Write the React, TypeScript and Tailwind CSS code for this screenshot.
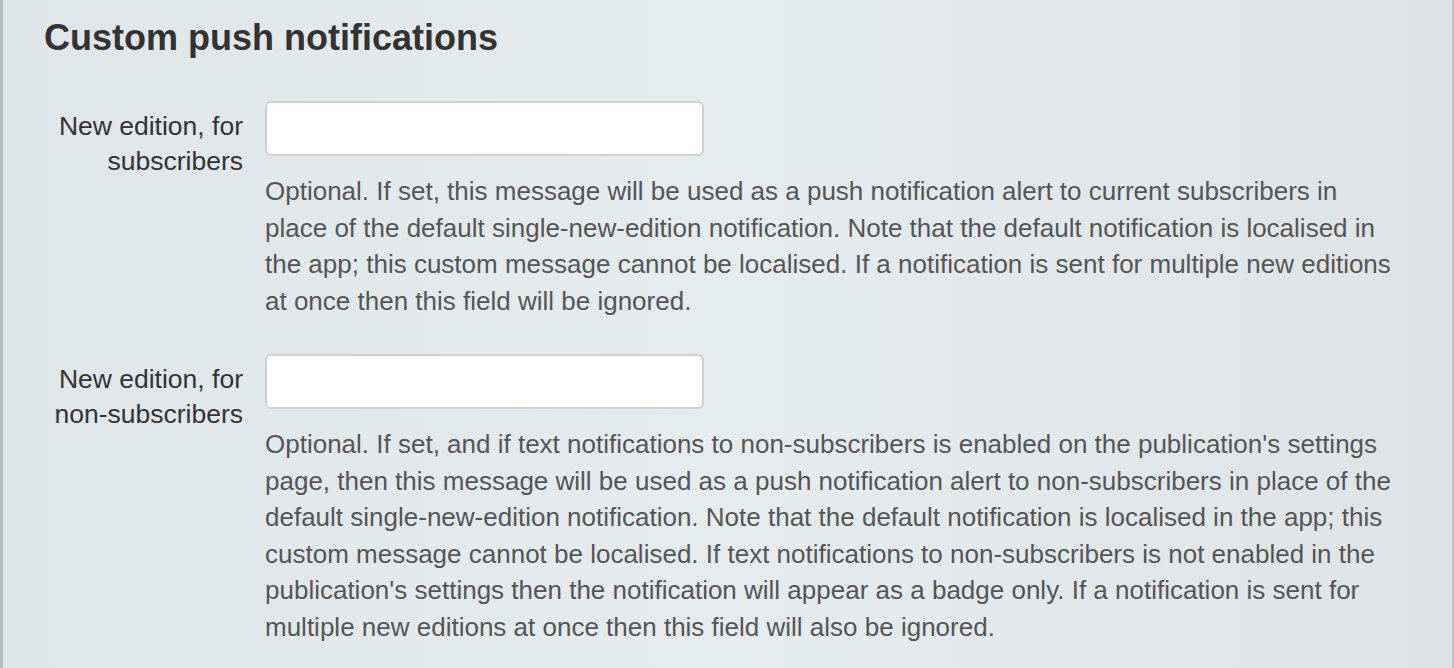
import React from "react";

function Group({ label, help }: { label: React.ReactNode; help: string }) {
  return (
    <div className="flex">
      <div className="w-[199px] shrink-0 text-right pt-[8px] text-[26.5px] leading-[35px] text-[#333]">
        {label}
      </div>
      <div className="ml-[22px] w-[1141px] shrink-0">
        <div className="w-[439px] h-[55px] bg-white border-2 border-[#d0d0d0] rounded-[6px]" />
        <p className="mt-[17px] text-[26px] leading-[36.5px] text-[#555]">{help}</p>
      </div>
    </div>
  );
}

export default function App() {
  return (
    <div
      className="w-[1454px] h-[668px] overflow-hidden flex bg-[#e6ebee]"
      style={{ fontFamily: '"Liberation Sans", Arial, sans-serif' }}
    >
      <div className="w-[3px] bg-[#b3bec4]" />
      <div className="flex-1 bg-gradient-to-r from-[#e0e5e8] via-[#e6ebee] to-[#dfe3e6] pl-[41px] pt-[17.5px]">
        <h3 className="text-[36px] font-bold text-[#333] leading-[40px]">Custom push notifications</h3>
        <div className="mt-[43.5px] flex flex-col gap-[35px]">
          <Group
            label={<>New edition, for<br />subscribers</>}
            help="Optional. If set, this message will be used as a push notification alert to current subscribers in place of the default single-new-edition notification. Note that the default notification is localised in the app; this custom message cannot be localised. If a notification is sent for multiple new editions at once then this field will be ignored."
          />
          <Group
            label={<>New edition, for<br />non-subscribers</>}
            help="Optional. If set, and if text notifications to non-subscribers is enabled on the publication's settings page, then this message will be used as a push notification alert to non-subscribers in place of the default single-new-edition notification. Note that the default notification is localised in the app; this custom message cannot be localised. If text notifications to non-subscribers is not enabled in the publication's settings then the notification will appear as a badge only. If a notification is sent for multiple new editions at once then this field will also be ignored."
          />
        </div>
      </div>
      <div className="w-[2px] bg-[#b9c2c7]" />
    </div>
  );
}
